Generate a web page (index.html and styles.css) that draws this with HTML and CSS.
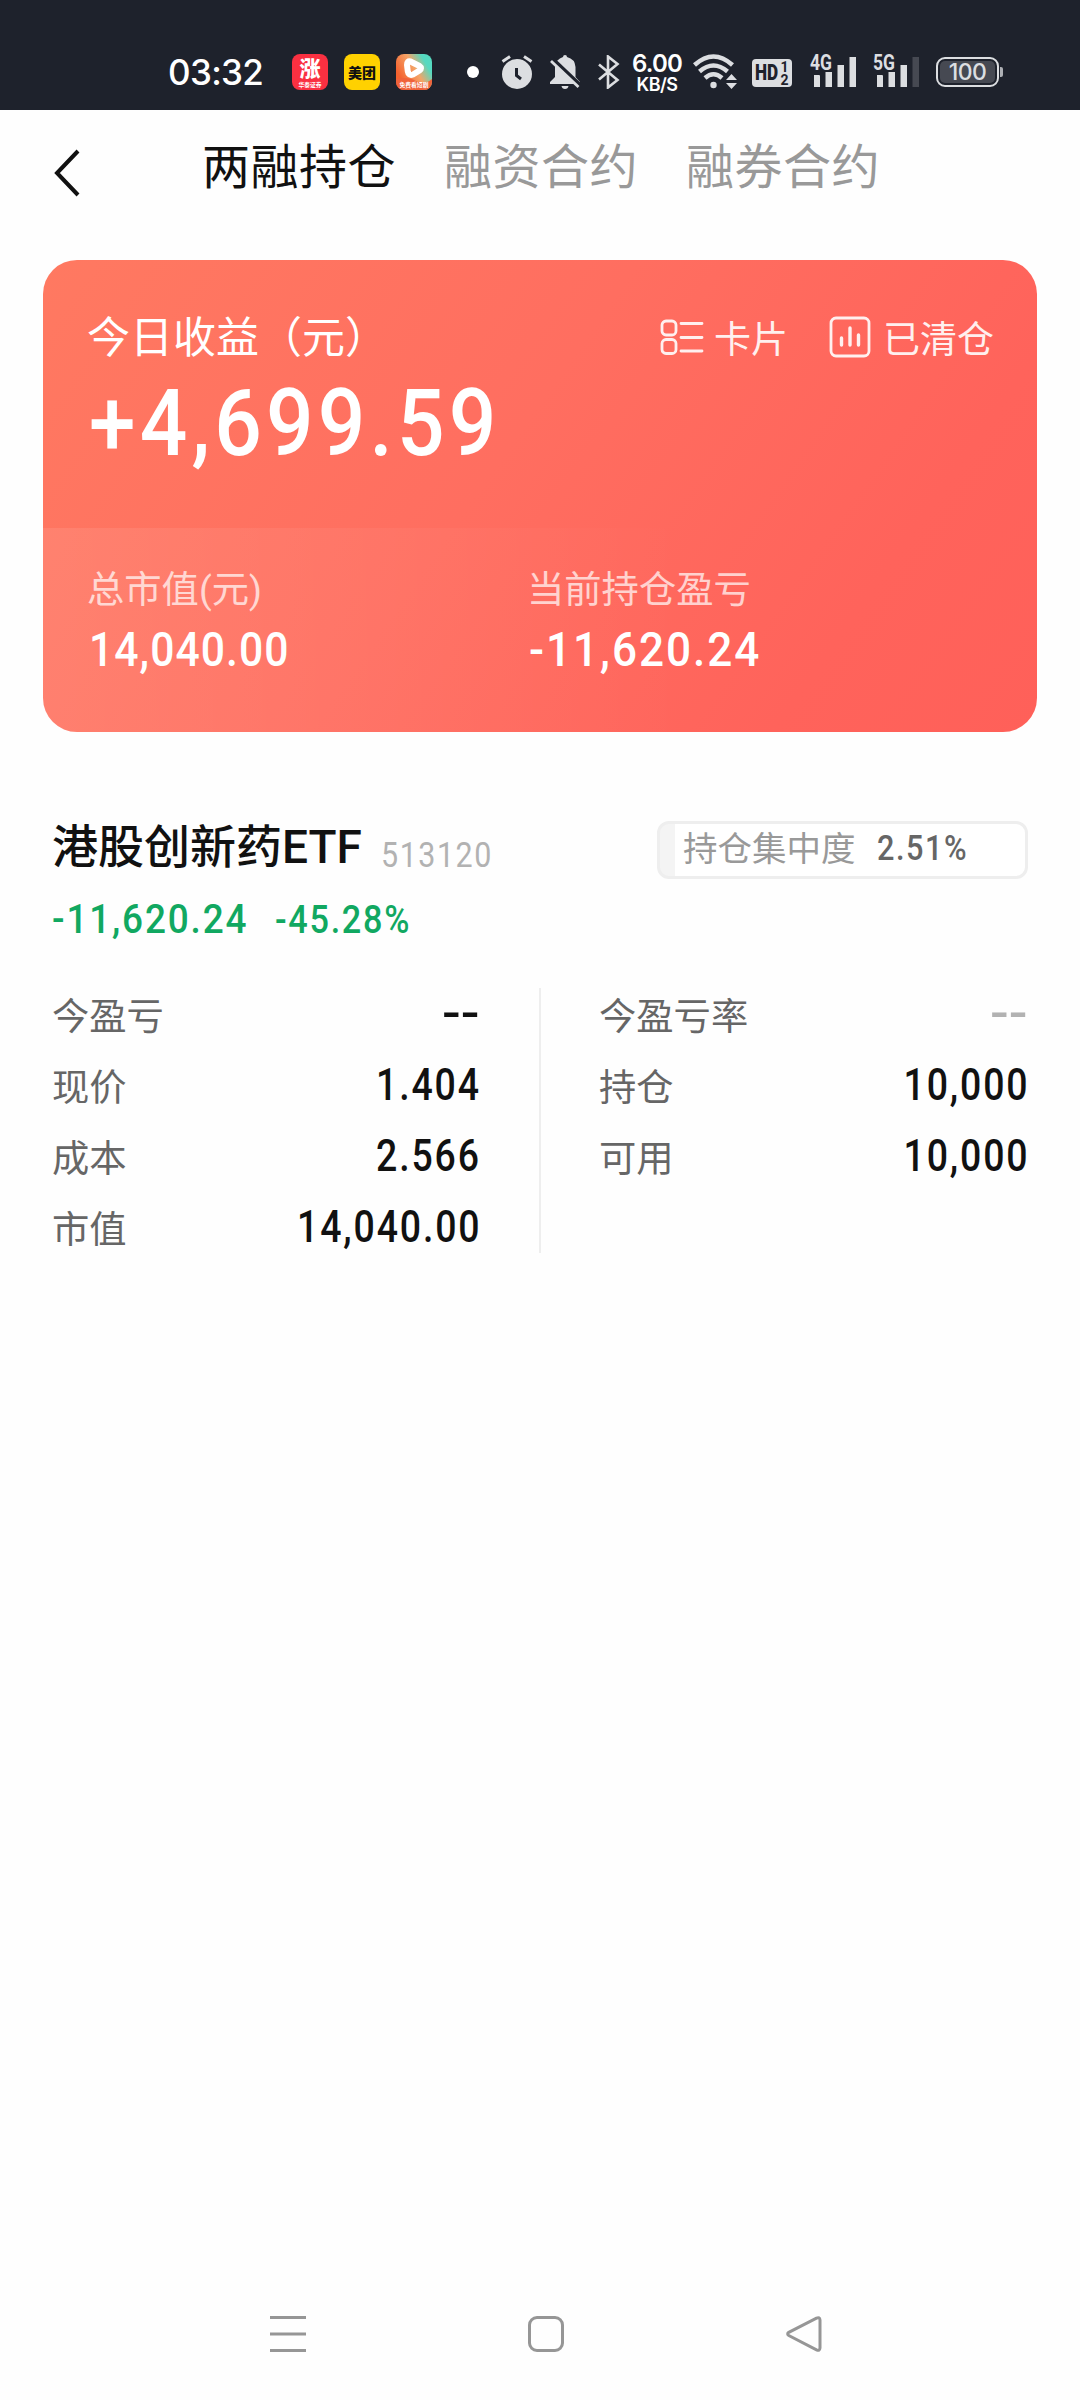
FILE: index.html
```
<!DOCTYPE html>
<html lang="zh-CN">
<head>
  <meta charset="UTF-8" />
  <title>两融持仓</title>
  <link rel="stylesheet" href="styles.css">
</head>
<body>
  <!-- 状态栏 -->
  <div class="status">
    <span class="time">03:32</span>
    <div class="apps">
      <div class="app app-red"><span class="zhang">涨</span><span class="tiny">华泰证券</span></div>
      <div class="app app-yellow">美团</div>
      <div class="app app-video">
        <svg width="36" height="36" viewBox="0 0 36 36"><path d="M0 25 Q12 22 20 27 T36 25 V36 H0 Z" fill="#f0623a" /><path d="M14.500 7.500 L23.500 12 Q26.500 14 23.500 16.500 L17 20.500 Q12.500 22 11.800 17.500 L11 11 Q11 6.500 14.500 7.500 Z" fill="none" stroke="#fff" stroke-width="6" stroke-linejoin="round" /></svg>
        <span class="tiny">免费看短剧</span>
      </div>
    </div>
    <i class="dot"></i>
    <svg class="alarm" width="32" height="34" viewBox="0 0 32 34"><circle cx="16" cy="19" r="15" fill="#dcdee1" /><path d="M1.500 6.500 L9 1.500 M30.500 6.500 L23 1.500" stroke="#dcdee1" stroke-width="3" /><path d="M15.500 13 V20.500 L20 24" fill="none" stroke="#1e222c" stroke-width="3" /></svg>
    <svg class="bell" width="30" height="34" viewBox="0 0 30 34"><path d="M15 0 Q17 0 17 2 Q25 4 25.500 12 V22 L30 27 V29 H0 V27 L5 22 V12 Q6 4 13 2 Q13 0 15 0 Z M11.500 31 H18.500 Q18 34 15 34 Q12 34 11.500 31 Z" fill="#dcdee1" /><path d="M2.500 4 L30 30" stroke="#1e222c" stroke-width="4" /><path d="M1 6 L28.500 32" stroke="#dcdee1" stroke-width="2.800" /></svg>
    <svg class="bt" width="22" height="34" viewBox="0 0 22 34"><path d="M1 9.500 L19.500 25 L10 32.500 V1.500 L19.500 9 L1 24.500" fill="none" stroke="#dcdee1" stroke-width="2.600" /></svg>
    <div class="speed"><b>6.00</b><span>KB/S</span></div>
    <svg class="wifi" width="46" height="36" viewBox="0 0 46 36"><g fill="none" stroke="#dcdee1" stroke-width="4.500"><path d="M1.500 11 Q20.500 -6 39.500 11" /><path d="M6.500 17.500 Q20.500 5.500 34.500 17.500" /><path d="M12 24 Q20.500 16.500 29 24" /></g><circle cx="20.500" cy="31" r="3.200" fill="#dcdee1" /><path d="M33 26 L38.500 20 L44 26 Z M33 29 L38.500 35 L44 29 Z" fill="#dcdee1" /></svg>
    <div class="hd"><b>HD</b><span><i>1</i><i>2</i></span></div>
    <svg class="signal" width="48" height="34" viewBox="0 0 48 34"><text x="0" y="16" class="net" textLength="22" lengthAdjust="spacingAndGlyphs">4G</text><path d="M4 21 H9 Q10 21 10 22 V33 H4 Z M15.500 18 H22 V33 H15.500 Z M27.500 11 H34 V33 H27.500 Z M39.500 3 H46 V33 H39.500 Z" fill="#dcdee1" /></svg>
    <svg class="signal" width="48" height="34" viewBox="0 0 48 34"><text x="0" y="16" class="net" textLength="22" lengthAdjust="spacingAndGlyphs">5G</text><path d="M4 21 H9 Q10 21 10 22 V33 H4 Z M15.500 18 H22 V33 H15.500 Z M27.500 11 H34 V33 H27.500 Z" fill="#dcdee1" /><path d="M39.500 3 H46 V33 H39.500 Z" fill="#464952" /></svg>
    <div class="battery"><span>100</span></div>
    <i class="cap"></i>
  </div>

  <!-- 顶部标签 -->
  <div class="header">
    <svg class="back" width="30" height="48" viewBox="0 0 30 48"><path d="M26 2 L5 24 L26 46" fill="none" stroke="#111" stroke-width="4" /></svg>
    <div class="tabs">
      <span class="active">两融持仓</span>
      <span>融资合约</span>
      <span>融券合约</span>
    </div>
  </div>

  <!-- 收益卡片 -->
  <div class="card">
    <div class="card-top">
      <div class="card-line">
        <span class="card-title">今日收益（元）</span>
        <div class="actions">
          <svg width="44" height="36" viewBox="0 0 44 36" fill="none" stroke="#fff" stroke-width="2.800" stroke-linecap="round"><rect x="2" y="2" width="14" height="14" rx="4" /><rect x="2" y="20.500" width="14" height="14" rx="4" /><path d="M21 4.500 H42 M21 18.500 H42 M21 32 H42" /></svg>
          <span class="act-card">卡片</span>
          <svg width="42" height="42" viewBox="0 0 42 42" fill="none" stroke="#fff" stroke-width="2.800" stroke-linecap="round"><rect x="2" y="2" width="38" height="38" rx="5" /><path d="M12.500 22 V29 M21 12 V29 M29.500 19 V29" stroke-width="3.400" /></svg>
          <span class="act-clear">已清仓</span>
        </div>
      </div>
      <span class="num hero">+4,699.59</span>
    </div>
    <div class="card-bottom">
      <div>
        <p>总市值(元)</p>
        <span class="num">14,040.00</span>
      </div>
      <div>
        <p>当前持仓盈亏</p>
        <span class="num neg">-11,620.24</span>
      </div>
    </div>
  </div>

  <!-- 持仓 -->
  <div class="stock">
    <div class="stock-head">
      <span class="name">港股创新药ETF</span>
      <span class="num code">513120</span>
      <div class="ratio"><span>持仓集中度</span><b class="num">2.51%</b></div>
    </div>
    <div class="profit">
      <span class="num neg">-11,620.24</span>
      <span class="num neg pct">-45.28%</span>
    </div>
    <div class="table">
      <div class="col">
        <div class="row"><span>今盈亏</span><b class="dash">--</b></div>
        <div class="row"><span>现价</span><b class="num">1.404</b></div>
        <div class="row"><span>成本</span><b class="num">2.566</b></div>
        <div class="row"><span>市值</span><b class="num">14,040.00</b></div>
      </div>
      <div class="col">
        <div class="row"><span>今盈亏率</span><b class="dash gray">--</b></div>
        <div class="row"><span>持仓</span><b class="num">10,000</b></div>
        <div class="row"><span>可用</span><b class="num">10,000</b></div>
      </div>
    </div>
  </div>

  <!-- 系统导航 -->
  <div class="nav">
    <svg width="36" height="36" viewBox="0 0 36 36"><path d="M0 1.500 H36 M0 18 H36 M0 34.500 H36" /></svg>
    <svg width="36" height="36" viewBox="0 0 36 36"><rect x="1.500" y="1.500" width="33" height="33" rx="7.500" /></svg>
    <svg width="36" height="36" viewBox="0 0 36 36"><path d="M30.500 2.200 Q33.800 0.800 34 4 V32 Q33.800 35.200 30.500 33.800 L2.800 19.500 Q0.500 18 2.800 16.300 Z" /></svg>
  </div>
</body>
</html>
```
FILE: styles.css
```
* { box-sizing: border-box; margin: 0; padding: 0; }
body {
  width: 1080px;
  height: 2400px;
  display: flex;
  flex-direction: column;
  background: #fefefe;
  font-family: Roboto, "Noto Sans CJK SC", sans-serif;
  color: #111;
  white-space: nowrap;
}
svg { display: block; flex: none; }
i { font-style: normal; }

/* status bar */
.status { height: 110px; background: #1e222c; display: flex; align-items: flex-start; padding: 34px 0 0 168px; color: #fff; }
.status > * { flex: none; }
.time { width: 124px; font: 500 35px/76px Inter, sans-serif; letter-spacing: -.7px; }
.apps { display: flex; gap: 16px; margin-top: 20px; width: 175px; }
.app { position: relative; width: 36px; height: 36px; border-radius: 8px; text-align: center; }
.app svg { border-radius: 8px; }
.app-red { background: #fa3041; }
.zhang { display: block; font: 900 21px/27px "Noto Sans CJK SC", sans-serif; }
.tiny { position: absolute; left: -18px; top: 25px; width: 72px; font: 700 12px/12px "Noto Sans CJK SC", sans-serif; transform: scale(.48); }
.app-yellow { background: #ffd100; color: #111; font: 900 14px/36px "Noto Sans CJK SC", sans-serif; }
.app-video { background: linear-gradient(60deg, #f4622f 20%, #f5a467 55%, #55d9c0 80%); }
.dot { width: 12px; height: 12px; border-radius: 50%; background: #fff; margin: 32px 22px 0 0; }
.alarm { margin: 21px 17px 0 0; }
.bell { margin: 21px 18px 0 0; }
.bt { margin: 21px 12px 0 0; }
.speed { width: 50px; height: 56px; margin: 17px 11px 0 0; text-align: center; }
.speed b { display: block; font: 600 24px/25px Inter, sans-serif; letter-spacing: -.8px; }
.speed span { display: block; font: 600 18px/18px Inter, sans-serif; letter-spacing: -.5px; }
.wifi { margin: 20px 13px 0 0; }
.hd { display: flex; justify-content: center; gap: 2px; width: 40px; height: 28px; margin: 25px 18px 0 0; border-radius: 4px; background: #dcdee1; color: #1e222c; font: 700 22px/28px Roboto, sans-serif; }
.hd b { width: 23px; transform: scaleX(.78); transform-origin: 0 50%; }
.hd span { font-size: 14px; line-height: 13px; padding-top: 2px; }
.hd i { display: block; }
.signal { margin: 20px 15px 0 0; overflow: visible; }
.net { font: 700 22px Roboto, sans-serif; fill: #dcdee1; }
.battery { width: 63px; height: 30px; margin-top: 23px; border: 2px solid #dcdee1; border-radius: 9px; padding: 2px; }
.battery span { display: block; height: 22px; border-radius: 5px; background: #464952; color: #dcdee1; font: 500 23px/22px Inter, sans-serif; text-align: center; letter-spacing: -.5px; }
.cap { width: 3px; height: 10px; margin: 33px 0 0 1px; border-radius: 0 2px 2px 0; background: #aeb0b5; }

/* header */
.header { height: 150px; display: flex; padding-left: 52px; }
.back { margin-top: 39px; }
.tabs { display: flex; gap: 48px; margin-left: 120px; font-size: 48px; line-height: 116px; letter-spacing: .5px; color: #999; }
.tabs .active { color: #111; }

/* numbers are slightly condensed */
.num { display: inline-block; font-family: Roboto, sans-serif; font-weight: 500; letter-spacing: .05em; transform: scaleX(.87); transform-origin: 0 50%; }
.num.neg { transform: scaleX(.9); }

/* card */
.card { width: 994px; height: 472px; margin-left: 43px; border-radius: 34px; overflow: hidden; background: linear-gradient(125deg, #ff7961, #ff6e60 45%, #ff635b 80%, #ff6059); color: #fff; }
.card-top { height: 268px; padding: 46px 43px 0 44px; }
.card-line { height: 62px; display: flex; justify-content: space-between; align-items: center; }
.card-title { font-size: 43px; line-height: 50px; margin-top: 1px; }
.actions { display: flex; align-items: center; font-size: 37px; opacity: .9; }
.act-card { margin: 0 41px 0 10px; }
.act-clear { margin-left: 12px; }
.num.hero { font-size: 93px; line-height: 111px; margin-left: 2px; transform: scaleX(.9); }
.card-bottom { height: 204px; display: flex; padding: 41px 0 0 44px; background: linear-gradient(90deg, rgba(255,255,255,.09), rgba(255,255,255,0) 65%); }
.card-bottom > div { width: 440px; }
.card-bottom p { font-size: 37.300px; line-height: 42px; opacity: .7; }
.card-bottom .num { font-size: 49px; line-height: 78px; letter-spacing: .025em; margin-left: 2px; }
.card-bottom .neg { letter-spacing: .045em; }

/* stock */
.stock { padding: 89px 52px 0; }
.stock-head { display: flex; height: 58px; }
.name { width: 329px; font-size: 46px; font-weight: 500; line-height: 53px; }
.code { font-size: 35px; font-weight: 400; line-height: 69px; color: #b2b2b2; }
.ratio { width: 371px; height: 58px; margin-left: auto; border: 3px solid #eee; border-radius: 12px; background: linear-gradient(90deg, #f4f4f4 15px, #fff 15px); display: flex; padding-left: 23px; line-height: 51px; font-size: 34.500px; color: #999; }
.ratio .num { margin-left: 21px; color: #666; font-size: 34.500px; line-height: 49px; transform: scaleX(.89); }
.profit { display: flex; height: 109px; color: #11a861; font-size: 41px; line-height: 81px; }
.profit .num { width: 223px; }
.profit .pct { font-size: 38px; line-height: 83px; }
.table { display: flex; height: 265px; }
.col { width: 489px; padding-right: 59px; border-right: 2px solid #eee; }
.col + .col { width: 487px; border: 0; padding: 0 0 0 58px; }
.row { display: flex; justify-content: space-between; height: 71px; line-height: 58px; font-size: 37.300px; color: #666; }
.row .num { transform: scaleX(.86); transform-origin: 100% 50%; line-height: 54px; font-size: 43.500px; margin-right: -1px; color: #111; }
.dash { font: 500 48px/50px Roboto, sans-serif; color: #111; transform: scaleX(1.15); transform-origin: 100% 50%; }
.dash.gray { color: #b2b2b2; }

/* navigation */
.nav { margin-top: auto; height: 84px; display: flex; gap: 222px; padding-left: 270px; }
.nav svg { fill: none; stroke: #969696; stroke-width: 3; }
```
